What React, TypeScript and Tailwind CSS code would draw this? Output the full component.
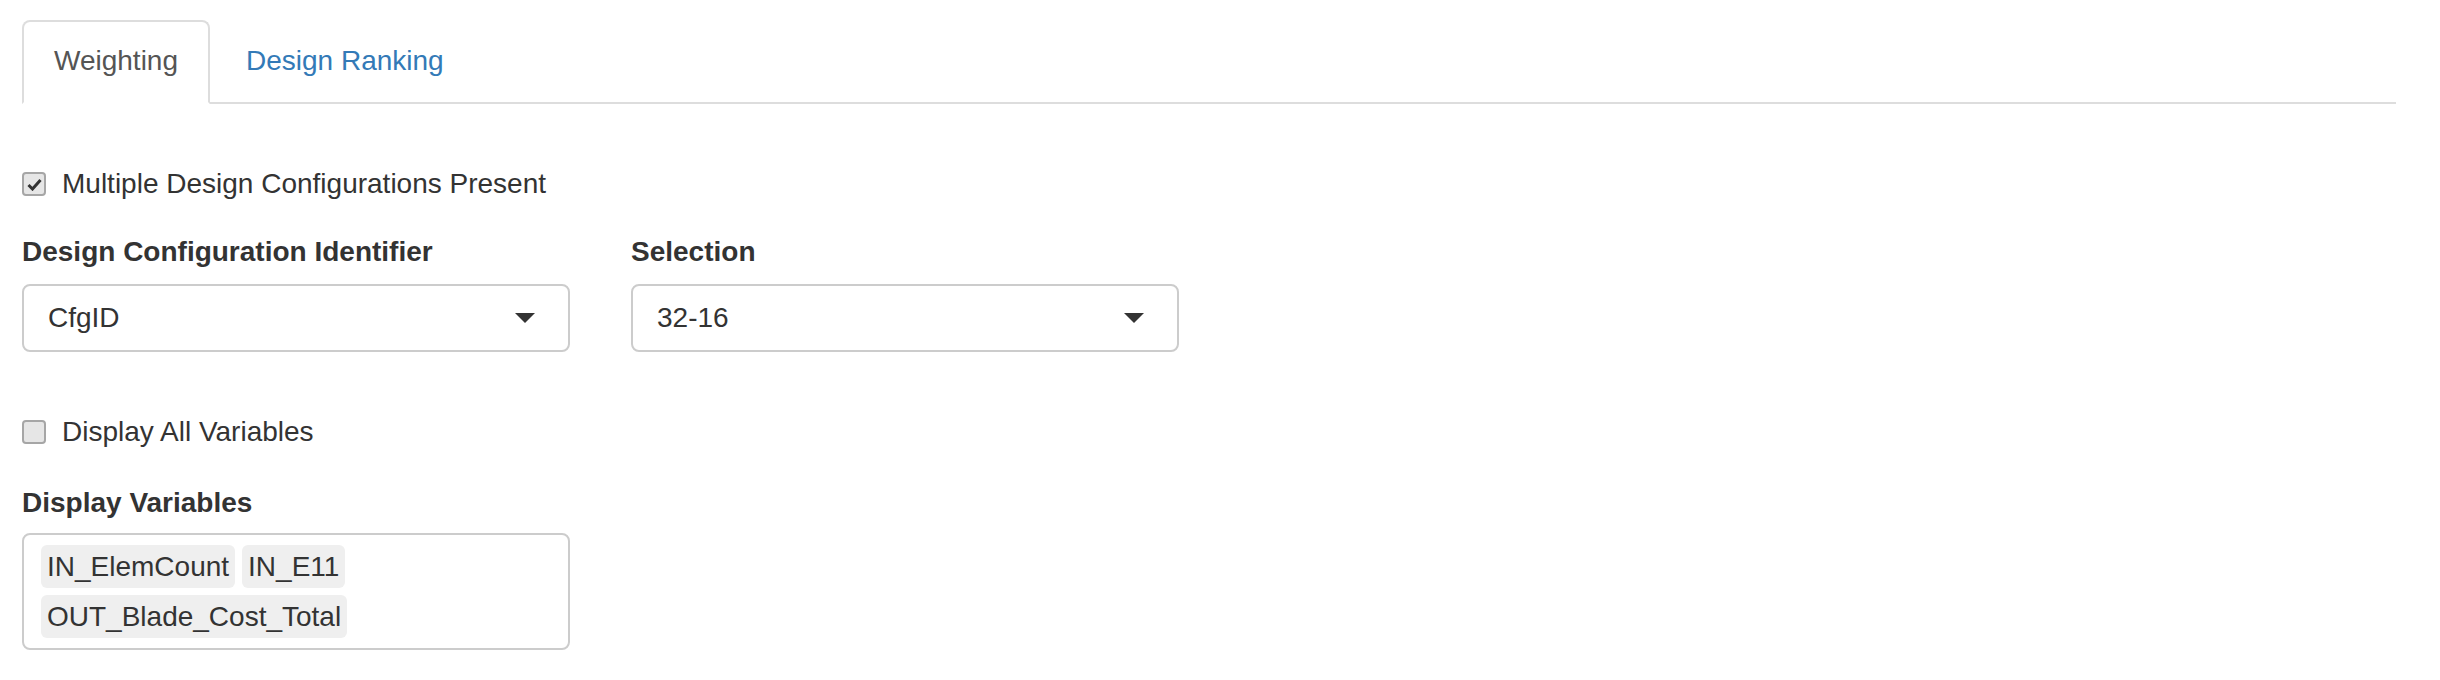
function Check({ checked }: { checked?: boolean }) {
  return (
    <span className="flex h-[24px] w-[24px] items-center justify-center rounded-[4px] border-2 border-[#a6a6a6] bg-[#e6e6e6]">
      {checked && (
        <svg width="15" height="13" viewBox="0 0 15 13">
          <path d="M1.5 7 L5.5 11 L13.5 2" fill="none" stroke="#333" strokeWidth="3" />
        </svg>
      )}
    </span>
  );
}

function Select({ value }: { value: string }) {
  return (
    <div className="flex h-[68px] w-[548px] items-center justify-between rounded-[8px] border-2 border-[#ccc] bg-white pl-[24px] pr-[33px] leading-[40px]">
      <span>{value}</span>
      <span className="h-0 w-0 border-x-[10px] border-t-[10px] border-x-transparent border-t-[#333]" />
    </div>
  );
}

function Pill({ text }: { text: string }) {
  return <span className="flex h-[43px] items-center rounded-[6px] bg-[#efefef] px-[6px]">{text}</span>;
}

export default function App() {
  return (
    <div className="min-h-[680px] bg-white pl-[22px] pr-[44px] pt-[20px] text-[28px] text-[#333]" style={{ fontFamily: '"Liberation Sans", Arial, sans-serif' }}>
      <div className="flex border-b-2 border-[#ddd]">
        <div className="-mb-[2px] rounded-t-[8px] border-2 border-[#ddd] border-b-white bg-white px-[30px] py-[19px] leading-[40px] text-[#555]">
          Weighting
        </div>
        <div className="ml-[4px] border-2 border-transparent px-[30px] py-[19px] leading-[40px] text-[#337ab7]">
          Design Ranking
        </div>
      </div>

      <div className="mt-[60px] flex h-[40px] items-center gap-[16px]">
        <Check checked />
        <span>Multiple Design Configurations Present</span>
      </div>

      <div className="mt-[28px] flex gap-[61px]">
        <div>
          <div className="mb-[12px] font-bold leading-[40px]">Design Configuration Identifier</div>
          <Select value="CfgID" />
        </div>
        <div>
          <div className="mb-[12px] font-bold leading-[40px]">Selection</div>
          <Select value="32-16" />
        </div>
      </div>

      <div className="mt-[60px] flex h-[40px] items-center gap-[16px]">
        <Check />
        <span>Display All Variables</span>
      </div>

      <div className="mt-[31px] mb-[10px] font-bold leading-[40px]">Display Variables</div>
      <div className="flex w-[548px] flex-wrap gap-x-[7px] gap-y-[7px] rounded-[8px] border-2 border-[#ccc] pb-[10px] pl-[17px] pr-[16px] pt-[10px]">
        <Pill text="IN_ElemCount" />
        <Pill text="IN_E11" />
        <Pill text="OUT_Blade_Cost_Total" />
      </div>
    </div>
  );
}
